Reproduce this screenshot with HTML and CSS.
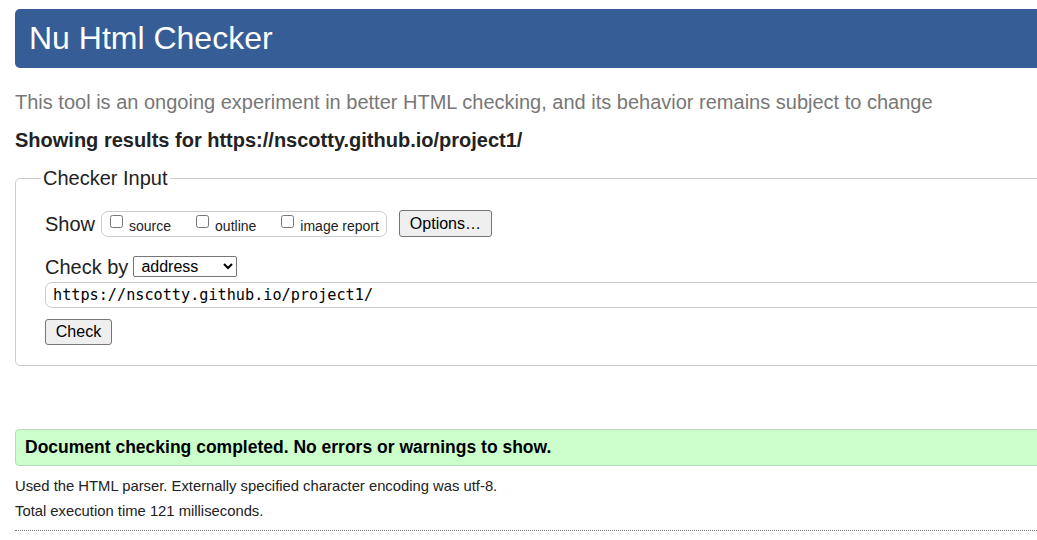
FILE: index.html
```html
<!DOCTYPE html>
<html lang="en">
<head>
<meta charset="utf-8">
<title>Nu Html Checker</title>
<link rel="stylesheet" href="styles.css">
</head>
<body>
<div class="page">
  <h1 class="banner">Nu Html Checker</h1>
  <p class="intro">This tool is an ongoing experiment in better HTML checking, and its behavior remains subject to change</p>
  <h2 class="results-for">Showing results for https://nscotty.github.io/project1/</h2>
  <form class="checker-form">
    <fieldset class="checker">
      <legend class="checker-legend">Checker Input</legend>
      <div class="row show-row">
        <span class="row-label">Show</span>
        <span class="opts">
          <label class="opt"><input type="checkbox" class="cb"><span>source</span></label>
          <label class="opt"><input type="checkbox" class="cb"><span>outline</span></label>
          <label class="opt"><input type="checkbox" class="cb"><span>image report</span></label>
        </span>
        <button type="button" class="btn btn-options">Options…</button>
      </div>
      <div class="row by-row">
        <label class="row-label" for="docselect">Check by</label>
        <select id="docselect" class="doc-select"><option>address</option></select>
      </div>
      <input type="url" class="url" value="https://nscotty.github.io/project1/">
      <div class="submit-row">
        <button type="button" class="btn btn-check">Check</button>
      </div>
    </fieldset>
  </form>
  <p class="success">Document checking completed. No errors or warnings to show.</p>
  <p class="details">Used the HTML parser. Externally specified character encoding was utf-8.</p>
  <p class="details">Total execution time 121 milliseconds.</p>
  <hr class="dotted">
</div>
</body>
</html>
```

FILE: styles.css
```css
html {
  overflow: hidden;
}
body {
  margin: 0;
  font-family: "Liberation Sans", Arial, sans-serif;
  color: #222;
  background: #fff;
}
.page {
  width: 1100px;
  padding: 9px 0 0 15px;
}
.banner {
  margin: 0;
  height: 59px;
  line-height: 59px;
  padding: 0 14px;
  background: #365d95;
  color: #fff;
  font-size: 32px;
  font-weight: normal;
  border-radius: 5px;
}
.intro {
  margin: 22px 0 0;
  font-size: 20px;
  line-height: 24px;
  color: #777;
}
.results-for {
  margin: 14px 0 0;
  font-size: 20px;
  line-height: 24px;
  font-weight: bold;
  color: #222;
}
.checker-form {
  margin: 14px 0 0;
}
.checker {
  margin: 0;
  padding: 20px 0 20px 29px;
  border: 1px solid #ccc;
  border-radius: 5px;
  min-width: 0;
}
.checker-legend {
  font-size: 20px;
  line-height: 24px;
  padding: 0 2px;
  margin-left: -4px;
  color: #222;
}
.row {
  display: flex;
  align-items: center;
}
.row-label {
  font-size: 20px;
  line-height: 24px;
}
.show-row {
  height: 27px;
}
.opts {
  display: flex;
  align-items: center;
  gap: 25px;
  height: 24px;
  margin-left: 6px;
  padding: 0 7px 0 8px;
  border: 1px solid #ccc;
  border-radius: 7px;
}
.opt {
  display: flex;
  align-items: center;
  gap: 6px;
  font-size: 14px;
  line-height: 16px;
}
.opt span {
  position: relative;
  top: 2px;
}
.cb {
  margin: 0;
  width: 13px;
  height: 13px;
  position: relative;
  top: -2px;
}
.btn {
  font-family: "Liberation Sans", Arial, sans-serif;
  font-size: 16px;
  line-height: 18px;
  color: #000;
  background: #efefef;
  border: 1px solid #767676;
  border-radius: 3px;
  padding: 3px 0;
  text-align: center;
}
.btn-options {
  margin-left: 12px;
  width: 93px;
  height: 27px;
}
.by-row {
  margin-top: 19px;
  height: 21px;
}
.doc-select {
  margin-left: 5px;
  width: 104px;
  height: 21px;
  font-family: "Liberation Sans", Arial, sans-serif;
  font-size: 16px;
  color: #000;
  border: 1px solid #767676;
  border-radius: 2px;
  background: #fff;
  padding: 0 0 0 3px;
}
.url {
  display: block;
  box-sizing: border-box;
  margin: 5px 0 0;
  width: 1040px;
  height: 26px;
  padding: 0 7px;
  border: 1px solid #ccc;
  border-radius: 7px;
  font-family: "DejaVu Sans Mono", "Liberation Mono", monospace;
  font-size: 15.2px;
  color: #000;
  background: #fff;
}
.submit-row {
  margin-top: 11px;
}
.btn-check {
  width: 67px;
  height: 26px;
}
.success {
  margin: 63px 0 0;
  height: 37px;
  box-sizing: border-box;
  padding: 0 9px;
  line-height: 35px;
  background: #ccffcc;
  border: 1px solid #b5dcb5;
  border-radius: 4px;
  font-size: 17.5px;
  font-weight: bold;
  color: #000;
}
.details {
  margin: 12px 0 0;
  font-size: 14.8px;
  line-height: 16px;
  color: #222;
}
.details + .details {
  margin-top: 9px;
}
.dotted {
  margin: 11px 0 0;
  border: 0;
  border-top: 1px dotted #777;
  height: 0;
}
```
